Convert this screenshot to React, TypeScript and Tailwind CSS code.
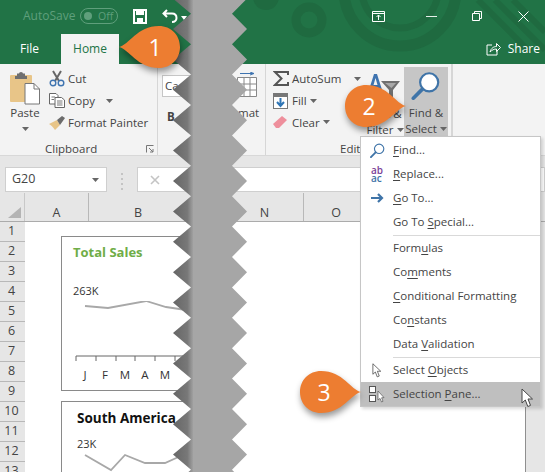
import React from "react";

const tips = Array.from({ length: 17 }, (_, k) => -1.4 + 30.4 * k);
const rightEdge = tips.map((y) => `74,${y.toFixed(1)} 59,${(y + 15.2).toFixed(1)}`).join(" ");
const leftEdge = tips
  .slice()
  .reverse()
  .map((y) => `18,${(y + 15.2).toFixed(1)} 0,${y.toFixed(1)}`)
  .join(" ");

function Tear() {
  return (
    <svg className="absolute left-[173px] top-0" width="75" height="472" viewBox="0 0 75 472">
      <defs>
        <linearGradient id="tearShade" x1="0" x2="1" y1="0" y2="0">
          <stop offset="0" stopColor="#666666" />
          <stop offset="0.6" stopColor="#787878" />
          <stop offset="0.85" stopColor="#a3a3a3" />
          <stop offset="1" stopColor="#a6a6a6" />
        </linearGradient>
      </defs>
      <polygon points={`24,472 ${leftEdge} 24,0`} fill="url(#tearShade)" />
      <polygon points={`20,0 ${rightEdge} 20,472`} fill="#a6a6a6" />
    </svg>
  );
}

function Callout({ n, cls, dir }: { n: string; cls: string; dir: "left" | "right" }) {
  const d =
    dir === "left"
      ? "M1 22 C11 20 19 1 41 1 C53 1 62 10 62 22 C62 34 53 43 41 43 C19 43 11 24 1 22 Z"
      : "M62 22 C52 20 44 1 22 1 C10 1 1 10 1 22 C1 34 10 43 22 43 C44 43 52 24 62 22 Z";
  return (
    <div className={`absolute flex h-[44px] w-[63px] items-center justify-center ${cls}`}>
      <svg className="absolute inset-0 drop-shadow-[1px_4px_3px_rgba(0,0,0,0.4)]" width="63" height="44" viewBox="0 0 63 44">
        <path d={d} fill="#ed7d31" />
      </svg>
      <span className={`relative text-[23px] leading-none text-white ${dir === "left" ? "ml-[11px]" : "mr-[13px]"}`}>{n}</span>
    </div>
  );
}

function Caret({ cls = "" }: { cls?: string }) {
  return (
    <svg className={`inline-block ${cls}`} width="7" height="4" viewBox="0 0 7 4">
      <path d="M0 0 H7 L3.5 4 Z" fill="#666" />
    </svg>
  );
}

function PasteIcon() {
  return (
    <svg width="30" height="33" viewBox="0 0 30 33">
      <rect x="0" y="3" width="22" height="27" rx="1" fill="#e8c588" />
      <path d="M7 4 V1.5 H9 a2 1.5 0 0 1 4 0 H15 V4 H17 V7 H5 V4 Z" fill="#6f6f6f" />
      <path d="M15 11.5 H24 L29.5 17 V32 H15 Z" fill="#fff" stroke="#777" />
      <path d="M24 11.5 V17 H29.5" fill="none" stroke="#777" />
    </svg>
  );
}
function ScissorsIcon() {
  return (
    <svg width="16" height="17" viewBox="0 0 16 17">
      <path d="M4 1 L10 11 M12 1 L6 11" stroke="#666" strokeWidth="2" fill="none" />
      <circle cx="4" cy="13" r="2.8" fill="none" stroke="#3f74b0" strokeWidth="1.4" />
      <circle cx="12" cy="13" r="2.8" fill="none" stroke="#3f74b0" strokeWidth="1.4" />
    </svg>
  );
}
function CopyIcon() {
  return (
    <svg width="16" height="15" viewBox="0 0 16 15" fill="#fff" stroke="#666">
      <path d="M.5.5 H7 L9 2.5 V11 H.5 Z" />
      <path d="M6 4.5 H12.5 L15.5 7 V14.5 H6 Z" />
      <path d="M2.5 4 H6 M2.5 6.5 H5 M8 8 H13.5 M8 10 H13.5 M8 12 H13.5" fill="none" strokeWidth="0.9" />
    </svg>
  );
}
function BrushIcon() {
  return (
    <svg width="17" height="15" viewBox="0 0 17 15">
      <path d="M0 9 L8 5 L11 10 L6 15 C4 12 2 10 0 9 Z" fill="#e8c588" />
      <path d="M8 5 L13 1 L16 3 L11 10 Z" fill="#6b6b6b" />
    </svg>
  );
}
function SigmaIcon() {
  return (
    <svg width="16" height="15" viewBox="0 0 16 15">
      <path d="M15 4 V1 H2 L8.5 7.5 L2 14 H15 V11" fill="none" stroke="#555" strokeWidth="2" />
    </svg>
  );
}
function FillIcon() {
  return (
    <svg width="15" height="16" viewBox="0 0 15 16">
      <rect x="0.5" y="0.5" width="14" height="15" fill="#fff" stroke="#777" />
      <rect x="0" y="0" width="15" height="4" fill="#777" />
      <path d="M7.5 5 V12 M4 9 L7.5 13 L11 9" stroke="#2f75b5" strokeWidth="2" fill="none" />
    </svg>
  );
}
function EraserIcon() {
  return (
    <svg width="15" height="14" viewBox="0 0 15 14">
      <path d="M0 9 L9 1 L14 5 L6 13 H3 Z" fill="#ee8f9c" />
    </svg>
  );
}
function SortIcon() {
  return (
    <svg width="32" height="33" viewBox="0 0 32 33">
      <path d="M0 20 L6 1 H9 L15 20 H12 L10.5 15 H4.5 L3 20 Z M5.5 12 H9.5 L7.5 5 Z" fill="#3f74b0" />
      <path d="M13 8 H32 L25 17 V27 H21 V17 Z" fill="#707070" />
      <path d="M17 10 H28 L23.5 15 Z" fill="#a8a8a8" />
    </svg>
  );
}
function LensIcon({ size = 32 }: { size?: number }) {
  return (
    <svg width={size} height={size} viewBox="0 0 32 32">
      <circle cx="19.5" cy="12.5" r="10" fill="#fff" stroke="#3f74a8" strokeWidth="2.4" />
      <path d="M12 20 L2 30" stroke="#3f74a8" strokeWidth="4" strokeLinecap="round" />
    </svg>
  );
}

function MiniRow({ icon, children, caret }: { icon: React.ReactNode; children: React.ReactNode; caret?: string }) {
  return (
    <div className="flex h-[23px] items-center">
      <div className="flex w-[19px] shrink-0 items-center">{icon}</div>
      <span>{children}</span>
      {caret && <Caret cls={caret} />}
    </div>
  );
}

function Ribbon() {
  return (
    <div className="flex h-[92px] border-b border-[#d8d8d8] bg-[#f3f3f3] text-[#444]">
      <div className="flex w-[158px] shrink-0 flex-col border-r border-[#d6d6d6]">
        <div className="flex h-[69px] pt-[4px]">
          <div className="flex w-[49px] shrink-0 flex-col items-center pl-[1px] pt-[4px]">
            <PasteIcon />
            <span className="leading-[16px]">Paste</span>
            <Caret cls="mt-[6px]" />
          </div>
          <div className="flex flex-col">
            <MiniRow icon={<ScissorsIcon />}>Cut</MiniRow>
            <MiniRow icon={<CopyIcon />} caret="ml-[11px]">Copy</MiniRow>
            <MiniRow icon={<BrushIcon />}>Format Painter</MiniRow>
          </div>
        </div>
        <div className="relative mt-[8px] h-[14px] pl-[45px] leading-[16px]">
          Clipboard
          <svg className="absolute left-[146px] top-[4px]" width="8" height="8" viewBox="0 0 8 8">
            <path d="M.5 7.5 V.5 H7.5 M3 3 L7 7 M4 7 H7 V4" stroke="#777" fill="none" />
          </svg>
        </div>
      </div>
      <div className="flex w-[108px] shrink-0 border-r border-[#d6d6d6] pl-[4px]">
        <div className="flex w-[72px] shrink-0 flex-col">
          <div className="mt-[11px] h-[22px] w-[60px] border border-[#c6c6c6] bg-white pl-[2px] leading-[20px]">Ca</div>
          <span className="ml-[5px] mt-[11px] font-bold">B</span>
        </div>
        <div className="flex flex-col items-center pt-[8px]">
          <svg width="20" height="26" viewBox="0 0 20 26">
            <path d="M3 1.5 H17 M13 0 L17 1.5 L13 3" stroke="#3f74b0" fill="none" />
            <path d="M.5 5.5 H19.5 V24.5 H.5 Z M.5 12 H19.5 M.5 18 H19.5 M7 5.5 V24.5 M13 5.5 V24.5" stroke="#888" fill="#fff" />
          </svg>
          <span className="ml-[4px] mt-[7px] leading-[16px]">mat</span>
        </div>
      </div>
      <div className="flex w-[187px] shrink-0 flex-col border-r-2 border-[#d6d6d6]">
        <div className="flex h-[69px] pt-[4px]">
          <div className="flex w-[100px] shrink-0 flex-col pl-[7px]">
            <MiniRow icon={<SigmaIcon />} caret="ml-[13px]">AutoSum</MiniRow>
            <MiniRow icon={<FillIcon />} caret="ml-[3px]">Fill</MiniRow>
            <MiniRow icon={<EraserIcon />} caret="ml-[3px]">Clear</MiniRow>
          </div>
          <div className="flex w-[38px] shrink-0 flex-col items-center pt-[5px] leading-[16px]">
            <div className="-ml-[3px]"><SortIcon /></div>
            <span>Sort &amp;</span>
            <span className="whitespace-nowrap">Filter <Caret cls="mb-[2px]" /></span>
          </div>
          <div className="-mt-[1px] flex h-[70px] w-[44px] shrink-0 flex-col items-center bg-[#c6c6c6] pt-[4px] leading-[16px]">
            <LensIcon />
            <span className="mt-[5px]">Find &amp;</span>
            <span className="whitespace-nowrap">Select <Caret cls="mb-[2px]" /></span>
          </div>
        </div>
        <div className="mt-[8px] h-[14px] pl-[74px] leading-[16px]">Editing</div>
      </div>
    </div>
  );
}

const rows = [1, 2, 3, 4, 5, 6, 7, 8, 9, 10, 11, 12, 13];

function Sheet() {
  return (
    <div className="flex h-[279px] flex-col bg-[#e6e6e6]">
      <div className="flex h-[29px] shrink-0 border-b border-[#ababab] text-[12.5px] text-[#444]">
        <div className="flex w-[25px] shrink-0 items-end justify-end border-r border-[#c8c8c8] pb-[3px] pr-[3px]">
          <svg width="13" height="11" viewBox="0 0 13 11"><path d="M13 0 V11 H0 Z" fill="#b4b4b4" /></svg>
        </div>
        {[
          ["A", "w-[64px] border-r border-[#b8b8b8]"],
          ["B", "w-[98px]"],
          ["", "w-[39px]"],
          ["N", "w-[78px] border-r border-[#b8b8b8]"],
          ["O", "w-[64px]"],
        ].map(([c, w], i) => (
          <div key={i} className={`flex ${w} shrink-0 items-end justify-center`}>
            <span className="leading-[17px]">{c}</span>
          </div>
        ))}
      </div>
      <div className="flex min-h-0 flex-1">
        <div className="w-[25px] shrink-0 overflow-hidden text-[12.5px] text-[#444]">
          {rows.map((r) => (
            <div key={r} className="flex h-[20px] items-center justify-center border-b border-[#b8b8b8] pr-[2px]">{r}</div>
          ))}
        </div>
        <div className="min-w-0 flex-1 overflow-hidden bg-white pl-[36px] pt-[14px]">
          <div className="h-[155px] w-[135px] border border-[#8a8a8a] pl-[11px]">
            <div className="mt-[6px] text-[13px] font-bold leading-[18px] text-[#70ad47]">Total Sales</div>
            <div className="mt-[23px] text-[11px] leading-[14px] text-[#333]">263K</div>
            <svg className="mt-[3px] -ml-[12px] block" width="134" height="66" viewBox="0 0 134 66">
              <polyline points="24,5 47,7 85,0 105,6 125,9" fill="none" stroke="#a8a8a8" strokeWidth="1.8" />
              <path d="M15 55 H130 M15 55 V60 M35 55 V60 M55 55 V60 M74 55 V60 M94 55 V60 M114 55 V60" stroke="#666" fill="none" />
            </svg>
            <div className="ml-[2px] flex text-[11.5px] leading-[16px] text-[#333]">
              {["J", "F", "M", "A", "M"].map((m, i) => (
                <span key={i} className="w-[20px] text-center">{m}</span>
              ))}
            </div>
          </div>
          <div className="mt-[10px] h-[90px] w-[135px] border border-[#8a8a8a] pl-[15px]">
            <div className="mt-[7px] text-[13.5px] font-bold leading-[18px] text-[#111]">South America</div>
            <div className="mt-[10px] text-[11px] leading-[14px] text-[#333]">23K</div>
            <svg className="mt-[1px] -ml-[16px] block" width="134" height="20" viewBox="0 0 134 20">
              <polyline points="24,3 50,18 64,3 84,11 104,11 124,2" fill="none" stroke="#a8a8a8" strokeWidth="1.8" />
            </svg>
          </div>
        </div>
        <div className="w-[20px] shrink-0 border-l border-[#8f8f8f] bg-[#e6e6e6]" />
      </div>
    </div>
  );
}

function MenuItem({ icon, children, active }: { icon?: React.ReactNode; children: React.ReactNode; active?: boolean }) {
  return (
    <div className={`flex h-[24px] items-center ${active ? "bg-[#bfbfbf]" : ""}`}>
      <div className="flex w-[32px] shrink-0 items-center justify-center">{icon}</div>
      <span>{children}</span>
    </div>
  );
}

const U = ({ children }: { children: React.ReactNode }) => (
  <span className="underline underline-offset-2">{children}</span>
);

const Sep = () => <div className="my-[0.5px] ml-[32px] h-px bg-[#d9d9d9]" />;

function ArrowCursor({ w, h, cls = "" }: { w: number; h: number; cls?: string }) {
  return (
    <svg className={cls} width={w} height={h} viewBox="0 0 13 20">
      <path d="M1 1 V15 L4.3 12 L6.8 18.5 L9.5 17.4 L7 11 L11.5 11 Z" fill="#fff" stroke="#444" strokeWidth="1" strokeLinejoin="round" />
    </svg>
  );
}

function Menu() {
  return (
    <div className="absolute left-[360px] top-[136px] h-[271px] w-[181px] border border-[#c6c6c6] bg-white pt-[1px] text-[#444] shadow-[2px_2px_3px_rgba(0,0,0,0.15)]">
      <MenuItem icon={<LensIcon size={15} />}><U>F</U>ind...</MenuItem>
      <MenuItem
        icon={
          <span className="flex flex-col text-[10px] font-semibold leading-[8px]">
            <span className="text-[#7b3f98]">ab</span>
            <span className="text-[#3f74a8]">ac</span>
          </span>
        }
      >
        <U>R</U>eplace...
      </MenuItem>
      <MenuItem
        icon={
          <svg width="13" height="10" viewBox="0 0 13 10">
            <path d="M0 5 H10 M7 1 L11 5 L7 9" stroke="#3f74a8" strokeWidth="2.2" fill="none" />
          </svg>
        }
      >
        <U>G</U>o To...
      </MenuItem>
      <MenuItem>Go To <U>S</U>pecial...</MenuItem>
      <Sep />
      <MenuItem>Form<U>u</U>las</MenuItem>
      <MenuItem>Co<U>m</U>ments</MenuItem>
      <MenuItem><U>C</U>onditional Formatting</MenuItem>
      <MenuItem>Co<U>n</U>stants</MenuItem>
      <MenuItem>Data <U>V</U>alidation</MenuItem>
      <Sep />
      <MenuItem icon={<ArrowCursor w={10} h={15} />}>Select <U>O</U>bjects</MenuItem>
      <MenuItem
        active
        icon={
          <svg width="18" height="18" viewBox="0 0 18 18">
            <rect x="1.5" y="1.5" width="6" height="6" fill="#fff" stroke="#555" />
            <rect x="1.5" y="10.5" width="6" height="6" fill="#fff" stroke="#555" />
            <path d="M10 6 V15 L12 13.4 L13.6 17 L15 16.3 L13.6 12.8 L16 12.6 Z" fill="#fff" stroke="#555" strokeWidth="0.7" />
          </svg>
        }
      >
        Selection <U>P</U>ane...
      </MenuItem>
    </div>
  );
}

function TitleArt() {
  return (
    <svg className="absolute left-0 top-0" width="545" height="64" viewBox="0 0 545 64">
      <circle cx="266" cy="-3" r="13" fill="#1f6a40" />
      <circle cx="309" cy="20" r="13" fill="none" stroke="#1f6a40" strokeWidth="9" />
      <circle cx="400" cy="-10" r="56" fill="none" stroke="#1f6a40" strokeWidth="11" />
      <circle cx="400" cy="-10" r="38" fill="none" stroke="#1f6a40" strokeWidth="7" />
      <path d="M478 0 L530 52 M495 0 L545 50 M513 0 L545 32" stroke="#1f6a40" strokeWidth="6" fill="none" />
    </svg>
  );
}

function TitleBar() {
  return (
    <div className="relative h-[64px] bg-[#217346] text-white">
      <TitleArt />
      <div className="relative flex h-[32px] items-center">
        <span className="ml-[23px] w-[57px] text-[12px] text-[#5f9f7c]">AutoSave</span>
        <div className="flex h-[16px] w-[38px] items-center rounded-full border border-[#5f9f7c] px-[3px]">
          <div className="h-[8px] w-[8px] rounded-full bg-[#5f9f7c]" />
          <span className="ml-[6px] text-[10.5px] leading-none text-[#5f9f7c]">Off</span>
        </div>
        <svg className="ml-[15px]" width="14" height="15" viewBox="0 0 14 15">
          <path d="M1 1 H13 V14 H1 Z" fill="none" stroke="#fff" strokeWidth="2" />
          <rect x="3" y="1" width="8" height="5" fill="#fff" />
          <rect x="4" y="9" width="6" height="5" fill="#fff" />
        </svg>
        <svg className="ml-[15px]" width="16" height="14" viewBox="0 0 16 14">
          <path d="M5 1 L1.5 4.5 L5 8 M2 4.5 H10 C13 4.5 14.5 6.5 14.5 9 C14.5 11 13 13 10 13" fill="none" stroke="#fff" strokeWidth="2" />
        </svg>
        <svg className="ml-[3px] mt-[3px]" width="6" height="4" viewBox="0 0 6 4"><path d="M0 0 H6 L3 4 Z" fill="#fff" /></svg>
        <div className="ml-auto flex items-center pr-[16px]">
          <svg width="13" height="11" viewBox="0 0 13 11">
            <path d="M.5 .5 H12.5 V10.5 H.5 Z M.5 2.5 H12.5 M6.5 9 V4 M4.5 6 L6.5 4 L8.5 6" fill="none" stroke="#fff" />
          </svg>
          <svg className="ml-[41px]" width="11" height="1" viewBox="0 0 11 1"><rect width="11" height="1" fill="#e6f0ea" /></svg>
          <svg className="ml-[35px]" width="10" height="10" viewBox="0 0 10 10">
            <path d="M.5 2.5 H7.5 V9.5 H.5 Z M2.5 2.5 V.5 H9.5 V7.5 H7.5" fill="none" stroke="#fff" />
          </svg>
          <svg className="ml-[36px]" width="11" height="11" viewBox="0 0 11 11">
            <path d="M.5 .5 L10.5 10.5 M10.5 .5 L.5 10.5" fill="none" stroke="#fff" />
          </svg>
        </div>
      </div>
      <div className="relative flex h-[32px] items-end">
        <span className="ml-[20px] h-[30px] w-[41px] text-[12px] leading-[30px]">File</span>
        <span className="h-[30px] w-[58px] bg-[#f3f3f3] text-center text-[12px] leading-[30px] text-[#217346]">Home</span>
        <div className="ml-auto flex h-[30px] items-center pr-[5px]">
          <svg width="15" height="14" viewBox="0 0 15 14">
            <path d="M6 3 H1 V13 H11 V9" fill="none" stroke="#fff" />
            <path d="M4 10 C5 6 8 4.5 10.5 4.5 V1.5 L14.5 5.5 L10.5 9.5 V7 C8 7 6 8 4 10 Z" fill="none" stroke="#fff" />
          </svg>
          <span className="ml-[7px] text-[12px]">Share</span>
        </div>
      </div>
    </div>
  );
}

function FormulaBar() {
  return (
    <div className="flex h-[37px] items-start bg-[#e6e6e6] pt-[11px] text-[#444]">
      <div className="ml-[5px] flex h-[25px] w-[102px] items-center justify-between border border-[#cfcfcf] bg-white px-[6px] text-[12.5px]">
        <span>G20</span>
        <Caret cls="mr-[1px]" />
      </div>
      <div className="ml-[14px] mt-[6px] flex flex-col gap-[3px]">
        {[0, 1, 2, 3].map((i) => (
          <div key={i} className="h-[2px] w-[2px] bg-[#c4c4c4]" />
        ))}
      </div>
      <div className="ml-[14px] flex h-[25px] flex-1 items-center border border-[#cfcfcf] bg-white pl-[12px]">
        <svg width="10" height="10" viewBox="0 0 10 10">
          <path d="M1 1 L9 9 M9 1 L1 9" stroke="#c4c4c4" strokeWidth="1.6" />
        </svg>
      </div>
    </div>
  );
}

export default function App() {
  return (
    <div
      className="relative h-[472px] w-[545px] overflow-hidden bg-white text-[11.5px]"
      style={{ fontFamily: '"Open Sans", "Noto Sans", sans-serif' }}
    >
      <TitleBar />
      <Ribbon />
      <FormulaBar />
      <Sheet />
      <Tear />
      <Menu />
      <Callout n="1" dir="left" cls="left-[118px] top-[25px]" />
      <Callout n="2" dir="right" cls="left-[344px] top-[84px]" />
      <Callout n="3" dir="right" cls="left-[299px] top-[370px]" />
      <ArrowCursor w={13} h={20} cls="absolute left-[521px] top-[388px]" />
    </div>
  );
}
